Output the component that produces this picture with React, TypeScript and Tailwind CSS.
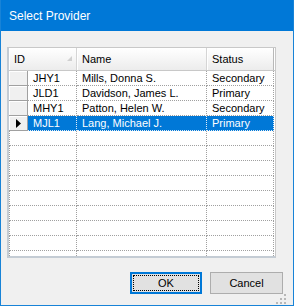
const rows = [
	{ id: 'JHY1', name: 'Mills, Donna S.', status: 'Secondary' },
	{ id: 'JLD1', name: 'Davidson, James L.', status: 'Primary' },
	{ id: 'MHY1', name: 'Patton, Helen W.', status: 'Secondary' },
	{ id: 'MJL1', name: 'Lang, Michael J.', status: 'Primary', selected: true },
];

const App = (): JSX.Element => {
	return (
		<div
			className="w-[294px] h-[306px] flex flex-col bg-[#f0f0f0] border-x border-b border-[#1883d7] text-black"
			style={{ fontFamily: '"Liberation Sans", Arial, sans-serif' }}
		>
			{/* title bar */}
			<div className="h-[31px] shrink-0 bg-[#0078d7] flex items-center pl-[8px] text-white text-[12px]">
				Select Provider
			</div>

			<div className="flex-1 flex flex-col px-[6px] pt-[16px]">
				{/* grid */}
				<div className="w-[269px] h-[211px] bg-white border-t border-r border-[#c8c8c8] border-l-2 border-b-2 border-l-[#c4ccd4] border-b-[#c4ccd4] overflow-hidden text-[11px]">
					<div className="flex h-[23px] border-b border-[#c8c8c8]">
						<div className="w-[68px] relative flex items-center pl-[5px] bg-gradient-to-b from-white to-[#ececec] border-r border-[#d5d5d5] shadow-[inset_1px_1px_0_#fff]">
							ID
							<svg className="absolute right-[4px] top-[8px]" width="5" height="5" viewBox="0 0 5 5">
								<path d="M0 5 L5 0 L5 5 Z" fill="#d0d0d0" />
							</svg>
						</div>
						<div className="w-[130px] flex items-center pl-[5px] bg-gradient-to-b from-white to-[#ececec] border-r border-[#d5d5d5] shadow-[inset_1px_1px_0_#fff]">
							Name
						</div>
						<div className="w-[67px] flex items-center pl-[5px] bg-gradient-to-b from-white to-[#ececec] border-r border-[#b8b8b8] shadow-[inset_1px_1px_0_#fff]">
							Status
						</div>
					</div>

					{rows.map((r) => (
						<div key={r.id} className="flex h-[15px]">
							<div className="w-[19px] bg-[#f0f0f0] border-r border-b border-[#a0a0a0] shadow-[inset_1px_1px_0_#fff] flex items-center pl-[7px]">
								{r.selected && (
									<svg width="5" height="9" viewBox="0 0 5 9">
										<path d="M0 0 L5 4.5 L0 9 Z" fill="#000" />
									</svg>
								)}
							</div>
							<div
								className={`w-[49px] flex items-center pl-[5px] border-r border-b border-dotted ${
									r.selected ? 'bg-[#0078d7] text-white border-[#e0ecf8]' : 'border-[#a0a0a0]'
								}`}
							>
								{r.id}
							</div>
							<div
								className={`w-[130px] flex items-center pl-[5px] border-r border-b border-dotted ${
									r.selected ? 'bg-[#0078d7] text-white border-[#e0ecf8]' : 'border-[#a0a0a0]'
								}`}
							>
								{r.name}
							</div>
							<div
								className={`w-[67px] flex items-center pl-[5px] border-r border-b border-dotted ${
									r.selected ? 'bg-[#0078d7] text-white border-[#e0ecf8]' : 'border-[#a0a0a0]'
								}`}
							>
								{r.status}
							</div>
						</div>
					))}

					{Array.from({ length: 9 }).map((_, i) => (
						<div key={i} className="flex h-[15px]">
							<div className="w-[68px] border-l border-r border-b border-dotted border-[#a0a0a0]" />
							<div className="w-[130px] border-r border-b border-dotted border-[#a0a0a0]" />
							<div className="w-[67px] border-r border-b border-dotted border-[#a0a0a0]" />
						</div>
					))}
				</div>

				{/* buttons */}
				<div className="flex justify-end gap-[8px] mt-[14px] pr-[4px]">
					<button className="w-[72px] h-[22px] bg-[#e1e1e1] border-2 border-[#0078d7] p-[1px] text-[11px]">
						<div className="h-full border border-dotted border-black flex items-center justify-center">OK</div>
					</button>
					<button className="w-[73px] h-[22px] bg-[#e1e1e1] border border-[#adadad] text-[11px] flex items-center justify-center">
						Cancel
					</button>
				</div>

				{/* size grip */}
				<div className="flex justify-end mt-auto pb-[2px] pr-[1px]">
					<svg width="10" height="10" viewBox="0 0 10 10">
						<rect x="8" y="0" width="2" height="2" fill="#b8b8b8" />
						<rect x="4" y="4" width="2" height="2" fill="#b8b8b8" />
						<rect x="8" y="4" width="2" height="2" fill="#b8b8b8" />
						<rect x="0" y="8" width="2" height="2" fill="#b8b8b8" />
						<rect x="4" y="8" width="2" height="2" fill="#b8b8b8" />
						<rect x="8" y="8" width="2" height="2" fill="#b8b8b8" />
					</svg>
				</div>
			</div>
		</div>
	);
};

export default App;
